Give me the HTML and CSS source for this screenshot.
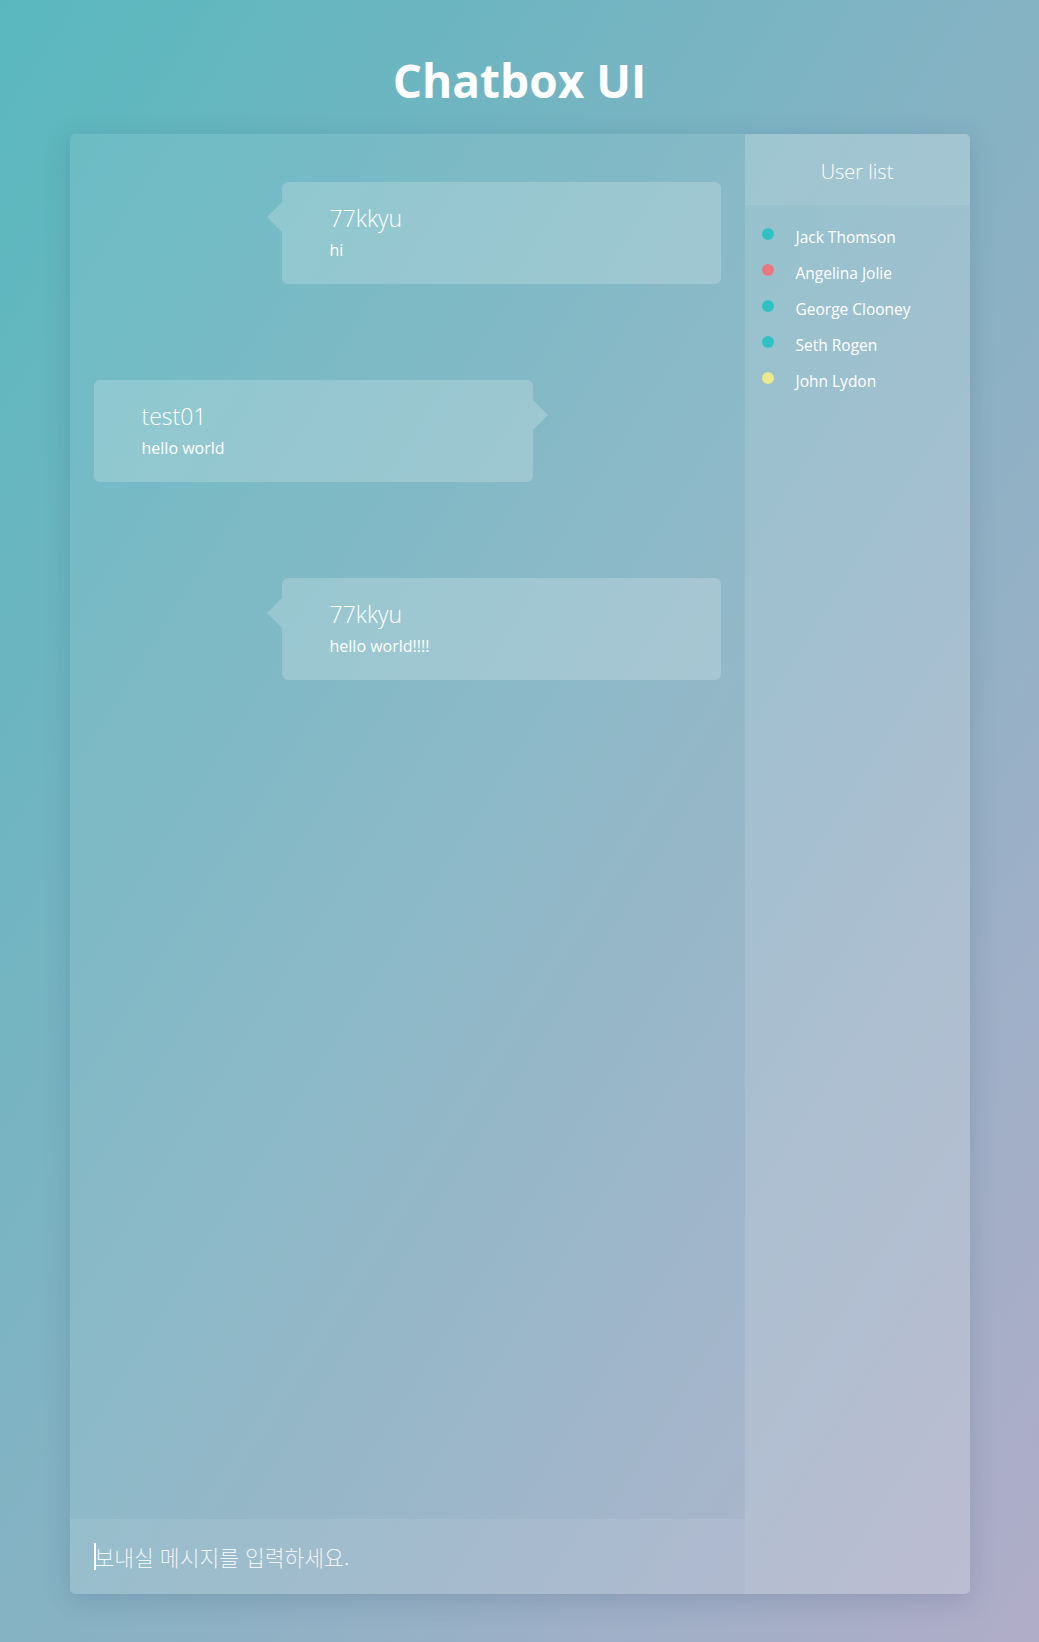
FILE: index.html
```html
<!DOCTYPE html>
<html lang="ko">
<head>
<meta charset="utf-8">
<title>Chatbox UI</title>
<link rel="stylesheet" href="styles.css">
</head>
<body>
<div class="page">
  <h1 class="title">Chatbox UI</h1>
  <div class="chatbox">
    <section class="chat">
      <div class="messages">
        <div class="msg mine">
          <div class="bubble">
            <div class="name">77kkyu</div>
            <div class="text">hi</div>
          </div>
        </div>
        <div class="msg other">
          <div class="bubble">
            <div class="name">test01</div>
            <div class="text">hello world</div>
          </div>
        </div>
        <div class="msg mine">
          <div class="bubble">
            <div class="name">77kkyu</div>
            <div class="text">hello world!!!!</div>
          </div>
        </div>
      </div>
      <div class="composer">
        <span class="caret"></span>
        <input class="input" type="text" placeholder="보내실 메시지를 입력하세요." autofocus>
      </div>
    </section>
    <aside class="sidebar">
      <div class="sidebar-head">User list</div>
      <ul class="users">
        <li class="user"><span class="dot teal"></span>Jack Thomson</li>
        <li class="user"><span class="dot red"></span>Angelina Jolie</li>
        <li class="user"><span class="dot teal"></span>George Clooney</li>
        <li class="user"><span class="dot teal"></span>Seth Rogen</li>
        <li class="user"><span class="dot yellow"></span>John Lydon</li>
      </ul>
    </aside>
  </div>
</div>
</body>
</html>
```

FILE: styles.css
```css
* { box-sizing: border-box; }

html, body {
  margin: 0;
  padding: 0;
}

body {
  min-height: 100vh;
  background: linear-gradient(to bottom right, #59b8be 0%, #b1adc9 100%);
  font-family: "Open Sans", "Noto Sans", "Noto Sans CJK KR", sans-serif;
  color: #fff;
}

.page {
  padding: 50px 0 48px;
}

.title {
  margin: 0 0 24px;
  text-align: center;
  font-size: 46px;
  line-height: 60px;
  font-weight: 700;
  color: #fff;
}

.chatbox {
  width: 900px;
  height: 1460px;
  margin: 0 auto;
  display: flex;
  border-radius: 5px;
  overflow: hidden;
  box-shadow: 0 6px 28px rgba(40, 60, 90, 0.18);
}

.chat {
  flex: 1;
  display: flex;
  flex-direction: column;
  background: rgba(255, 255, 255, 0.08);
}

.messages {
  flex: 1;
  padding: 48px 24px 0;
  display: flex;
  flex-direction: column;
  gap: 96px;
}

.msg {
  display: flex;
}

.msg.mine { justify-content: flex-end; }
.msg.other { justify-content: flex-start; }

.bubble {
  position: relative;
  width: 439px;
  padding: 20px 48px 22px;
  border-radius: 6px;
  background: rgba(255, 255, 255, 0.2);
}

.bubble::before {
  content: "";
  position: absolute;
  top: 20px;
  border-top: 15px solid transparent;
  border-bottom: 15px solid transparent;
}

.msg.mine .bubble::before {
  left: -15px;
  border-right: 15px solid rgba(255, 255, 255, 0.2);
}

.msg.other .bubble::before {
  right: -15px;
  border-left: 15px solid rgba(255, 255, 255, 0.2);
}

.name {
  font-size: 23px;
  line-height: 32px;
  font-weight: 300;
}

.text {
  margin-top: 4px;
  font-size: 16px;
  line-height: 24px;
  font-weight: 400;
}

.composer {
  position: relative;
  height: 75px;
  display: flex;
  align-items: center;
  padding: 0 24px;
  background: rgba(255, 255, 255, 0.08);
}

.caret {
  position: absolute;
  left: 24px;
  top: 24px;
  width: 2px;
  height: 27px;
  background: #fff;
}

.input {
  width: 100%;
  border: none;
  outline: none;
  background: transparent;
  padding: 0 0 0 1px;
  font-family: "Noto Sans CJK KR", "Noto Sans", sans-serif;
  font-size: 21.5px;
  font-weight: 300;
  color: #fff;
  caret-color: #fff;
}

.input::placeholder {
  color: rgba(255, 255, 255, 0.85);
}

.sidebar {
  width: 225px;
  background: rgba(255, 255, 255, 0.19);
}

.sidebar-head {
  height: 71px;
  padding-top: 4px;
  line-height: 67px;
  text-align: center;
  font-size: 20px;
  font-weight: 300;
  background: rgba(255, 255, 255, 0.08);
}

.users {
  list-style: none;
  margin: 0;
  padding: 14px 0 0 17px;
}

.user {
  display: flex;
  align-items: center;
  height: 36px;
  font-size: 15.5px;
  font-weight: 400;
}

.dot {
  width: 12px;
  height: 12px;
  border-radius: 50%;
  margin-right: 22px;
  margin-top: -6px;
}

.dot.teal { background: #2fc1c3; }
.dot.red { background: #e97880; }
.dot.yellow { background: #e9ea8c; }
```
